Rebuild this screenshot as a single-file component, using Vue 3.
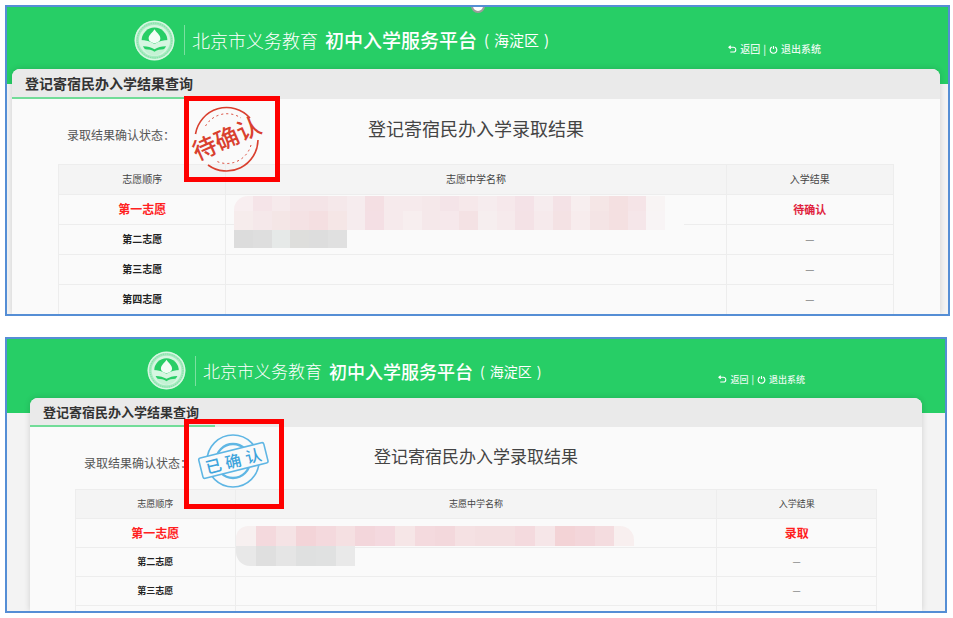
<template>
  <main class="page">
    <section v-for="s in screens" :key="s.id" class="screen" :class="s.id">
      <span v-if="s.handle" class="handle" />

      <!-- Green banner -->
      <header class="banner">
        <svg class="logo" viewBox="0 0 42 42" aria-hidden="true">
          <circle cx="21" cy="21" r="20.4" fill="#a6ebc0" />
          <circle cx="21" cy="21" r="19.6" fill="none" stroke="#d8f7e3" stroke-width="1.4" />
          <circle cx="21" cy="21" r="17.8" fill="none" stroke="#86e2a8" stroke-width="1.2" stroke-dasharray="1.4 1" />
          <circle cx="21" cy="21" r="16" fill="#d6f6e1" />
          <circle cx="21" cy="21" r="13.2" fill="#27ce66" />
          <path d="M21 9.5 C22.5 12.500 27 15 27 19 C27 21.500 25 23 21 24 C17 23 15 21.500 15 19 C15 15 19.500 12.500 21 9.500 Z" fill="#f2fdf6" />
          <path d="M5.500 20.500 C11 20.300 17 21.800 21 24.500 C25 21.800 31 20.300 36.500 20.500 C36.300 23 35.800 25 35 27 C29.500 26.500 25 27.500 21 30 C17 27.500 12.500 26.500 7 27 C6.200 25 5.700 23 5.500 20.500 Z" fill="#d6f6e1" />
          <path d="M10 30 C14 29.800 18 30.500 21 32.500 C24 30.500 28 29.800 32 30 C29 34 25 36.500 21 36.500 C17 36.500 13 34 10 30 Z" fill="#c4f2d4" />
        </svg>
        <span class="divider" />
        <h1 class="brand">
          <span class="light">北京市义务教育</span>
          <span class="strong">初中入学服务平台</span>
          <span class="area"><i>(</i>海淀区<i>)</i></span>
        </h1>
        <nav class="links">
          <a href="#">
            <svg viewBox="0 0 10 10" aria-hidden="true">
              <path d="M1 2.5 H6 A2.6 2.6 0 0 1 6 7.8 H2.5 M3 0.8 L1 2.5 L3 4.2" fill="none" stroke="#fff" stroke-width="1.2" />
            </svg>返回</a>
          <span>|</span>
          <a href="#">
            <svg viewBox="0 0 10 10" aria-hidden="true">
              <path d="M3.2 2.2 A3.7 3.7 0 1 0 6.8 2.2 M5 1 V4.4" fill="none" stroke="#fff" stroke-width="1.3" />
            </svg>退出系统</a>
        </nav>
      </header>

      <!-- Result card -->
      <div class="card">
        <div class="tabs"><h2 class="tab">登记寄宿民办入学结果查询</h2></div>
        <div class="summary">
          <span class="status">录取结果确认状态：</span>
          <h3 class="title">登记寄宿民办入学录取结果</h3>
        </div>

        <table class="results">
          <thead>
            <tr>
              <th>志愿顺序</th>
              <th class="school">志愿中学名称</th>
              <th>入学结果</th>
            </tr>
          </thead>
          <tbody>
            <tr v-for="(row, i) in s.rows" :key="row.order" :class="{ first: i === 0 }">
              <td class="order">{{ row.order }}</td>
              <td class="school">
                <div v-if="i === 0" class="mosaic">
                  <div v-for="(line, n) in s.mosaic" :key="n" class="tiles" :class="'line' + n">
                    <span v-for="(c, k) in line" :key="k" :style="{ background: c }" />
                  </div>
                </div>
              </td>
              <td class="outcome">{{ row.outcome }}</td>
            </tr>
            <tr v-if="s.tail" class="tail"><td /><td /><td /></tr>
          </tbody>
        </table>

        <!-- Highlighted stamp -->
        <div class="mark">
          <svg v-if="s.id === 'pending'" class="stamp" viewBox="0 0 86 76" role="img" aria-label="待确认">
            <g fill="none" stroke="#d9402f">
              <path d="M6.500 33 A31.500 31.500 0 0 1 61 17" stroke-width="1.6" />
              <path d="M69 39 A31.500 31.500 0 0 1 19 64" stroke-width="1.6" />
              <path d="M16.500 25 A25 25 0 0 1 52 17" stroke-dasharray="2 3" />
              <path d="M62 44 A25 25 0 0 1 27 60" stroke-dasharray="2 3" />
            </g>
            <text x="38" y="46" transform="rotate(-24 38 38)" text-anchor="middle" font-size="24" font-weight="500" fill="#d9402f">待确认</text>
          </svg>
          <svg v-else class="stamp" viewBox="0 0 90 80" role="img" aria-label="已确认">
            <g fill="none" stroke="#5fb6e4" stroke-width="1.6">
              <circle cx="44" cy="37" r="26" />
              <circle cx="44" cy="37" r="17" stroke-width="2.4" />
              <rect x="11" y="26" width="67" height="21" rx="2" transform="rotate(-14 44.500 37)" fill="#fafafa" />
            </g>
            <g fill="#3fa4dc" font-size="16" font-weight="500" text-anchor="middle" transform="rotate(-14 44.500 37)">
              <text x="24" y="43">已</text>
              <text x="44" y="43">确</text>
              <text x="65" y="43">认</text>
            </g>
          </svg>
        </div>
      </div>
    </section>
  </main>
</template>

<script setup>
const screens = [
  {
    id: 'pending',
    handle: true,
    tail: false,
    rows: [
      { order: '第一志愿', outcome: '待确认' },
      { order: '第二志愿', outcome: '—' },
      { order: '第三志愿', outcome: '—' },
      { order: '第四志愿', outcome: '—' },
    ],
    mosaic: [
      [
        '#f8eef0', '#f5e4e8', '#f6eaec', '#f4e4e7', '#f4e4e7', '#f5e8ea', '#f6ecee', '#f4dfe3',
        '#f6eaec', '#f6eaec', '#f5e8ea', '#f4e4e8', '#f6e8ea', '#f6ecee', '#f6e8eb', '#f4e2e7',
        '#f6ecee', '#f4e2e6', '#f7eeef', '#f5e6e6', '#f4e0e1', '#f5e4e7', '#f8f4f4', '#fafafa',
      ],
      [
        '#f6ecec', '#f5e8ea', '#f4e6e6', '#f4e2e4', '#f4dfe1', '#f5e6e6', '#f6ecee', '#f4dfe4',
        '#f6eaec', '#f7eeef', '#f5e8ea', '#f6e8eb', '#f4e2e4', '#f6eeef', '#f6eaec', '#f4e2e6',
        '#f6eaec', '#f4e2e4', '#f7eced', '#f4e4e5', '#f4e0e1', '#f5e6e9', '#f8f4f5', '#fafafa',
      ],
      ['#dcdcdc', '#dedede', '#e6e9e8', '#dededc', '#dddddd', '#e0e0e0'],
    ],
  },
  {
    id: 'confirmed',
    handle: false,
    tail: true,
    rows: [
      { order: '第一志愿', outcome: '录取' },
      { order: '第二志愿', outcome: '—' },
      { order: '第三志愿', outcome: '—' },
    ],
    mosaic: [
      [
        '#f7f0f0', '#f4d9dd', '#f5e3e5', '#f3d4d8', '#f4d9dd', '#f5e0e2', '#f3d6db', '#f4d9df',
        '#f6e6e7', '#f4dade', '#f3d8dc', '#f5e1e3', '#f4dfe1', '#f4dfe1', '#f4dade', '#f6e6e8',
        '#f3d3d6', '#f3d6da', '#f4dcdf', '#f8efef',
      ],
      ['#e8e8e8', '#dfdfdf', '#e5e5e5', '#dfe0e0', '#e0e1e1', '#e9e9e9'],
    ],
  },
]
</script>

<style>
body {
  margin: 0;
  background: #fff;
}
</style>

<style scoped>
.page {
  display: flex;
  flex-direction: column;
  gap: 21px;
  padding: 5px 3px 5px 5px;
  font-family: 'Noto Sans CJK SC', 'Liberation Sans', sans-serif;
}

.screen {
  position: relative;
  overflow: hidden;
  border: 2px solid #558ed5;
  background: #f3f3f3;
}
.pending {
  --banner: 62px;
  --edge: 127px;
  --logo: 41px;
  --thin: 18px;
  --bold: 19px;
  --area: 15px;
  --link: 10px;
  --tab: 30px;
  --tab-text: 14px;
  --summary: 65px;
  --title: 18px;
  --indent: 55px;
  --row: 30px;
  --cell: 10px;
}
.confirmed {
  --banner: 59px;
  --edge: 140px;
  --logo: 39px;
  --thin: 17px;
  --bold: 18px;
  --area: 14px;
  --link: 9px;
  --tab: 29px;
  --tab-text: 13px;
  --summary: 62px;
  --title: 17px;
  --indent: 54px;
  --row: 29px;
  --cell: 9px;
  margin-right: 3px;
}

.handle {
  position: absolute;
  top: -8px;
  left: 50%;
  width: 10px;
  height: 10px;
  margin-left: -7px;
  border: 2px solid #9c9c9c;
  border-radius: 50%;
  background: #fff;
}

/* Banner */
.banner {
  display: flex;
  align-items: center;
  height: var(--banner);
  padding: 0 var(--edge) 15px;
  background: #27ce66;
}
.logo { width: var(--logo); height: var(--logo); margin-top: 4px; }
.divider { width: 1px; height: 30px; margin: 4px 7px 0 9px; background: #7be0a0; }
.brand {
  display: flex;
  align-items: center;
  gap: 7px;
  margin: 4px 0 0;
  line-height: 28px;
  color: #fff;
  white-space: nowrap;
}
.light { font-size: var(--thin); font-weight: 300; }
.strong { font-size: var(--bold); font-weight: 500; }
.area { display: flex; gap: 5px; font-size: var(--area); font-weight: 400; }
.area i { font-style: normal; }

.links {
  display: flex;
  align-items: center;
  gap: 3px;
  margin: 22px 0 0 auto;
  font-size: var(--link);
  font-weight: 500;
  line-height: 14px;
  color: #e9fbf0;
}
.links a { display: flex; align-items: center; gap: 3px; color: inherit; text-decoration: none; }
.links svg { width: 9px; height: 9px; }

/* Card */
.card {
  position: relative;
  margin-top: -15px;
  border-radius: 8px 8px 0 0;
  background: #fafafa;
  box-shadow: 0 0 6px rgba(0, 0, 0, 0.15);
}
.pending .card { margin-left: 5px; margin-right: 8px; }
.confirmed .card { margin-left: 23px; margin-right: 23px; }

.tabs { display: flex; height: var(--tab); border-radius: 8px 8px 0 0; background: #eaeaea; }
.tab {
  box-sizing: border-box;
  min-width: 185px;
  margin: 0;
  padding-left: 13px;
  border-bottom: 2px solid #72dc98;
  font-size: var(--tab-text);
  font-weight: 700;
  line-height: 28px;
  color: #333;
}

.summary {
  display: grid;
  grid-template-columns: 1fr auto 1fr;
  height: var(--summary);
  padding-left: var(--indent);
  padding-right: var(--indent);
}
.status { padding-top: 26px; font-size: 12px; line-height: 20px; color: #555; }
.title { margin: 16px 0 0; font-size: var(--title); font-weight: 400; line-height: 26px; color: #444; }

/* Results */
.results {
  width: 90%;
  margin: 0 auto;
  border-spacing: 0;
  border-right: 1px solid #ededed;
  table-layout: fixed;
  font-size: var(--cell);
  line-height: 14px;
  text-align: center;
}
.results th,
.results td {
  box-sizing: border-box;
  width: 20%;
  height: var(--row);
  padding: 0 0 1px;
  border-top: 1px solid #ededed;
  border-left: 1px solid #ededed;
}
.results th { background: #f4f4f4; font-weight: 400; color: #444; }
.results .school { position: relative; width: 60%; }
.results .tail td { height: 6px; }
.order { font-weight: 700; color: #222; }
.outcome { font-weight: 700; color: #999; }
.first .order { font-size: 12px; color: #ff2020; }
.first .outcome { font-size: 12px; color: #ff2020; }
.pending .first .outcome { font-size: 11px; color: #e01f3d; }

/* Pixelated school names */
.mosaic { position: absolute; z-index: 1; top: 1px; left: 8px; width: 90%; }
.tiles { display: flex; height: 18px; }
.tiles span { flex: 1; }
.pending .line0 { height: 15px; border-top-left-radius: 14px; overflow: hidden; }
.pending .line1 { height: 19px; }
.pending .line2 { width: 25%; }
.confirmed .mosaic { top: 7px; left: 0; width: 83%; }
.confirmed .tiles { height: 20px; overflow: hidden; }
.confirmed .line0 { border-radius: 12px 14px 0 0; }
.confirmed .line1 { width: 30%; border-bottom-left-radius: 14px; }

/* Red highlight around the stamp */
.mark {
  position: absolute;
  z-index: 2;
  border: 5px solid #fe0000;
}
.pending .mark { top: 27px; left: 172px; width: 86px; height: 76px; }
.confirmed .mark { top: 21px; left: 154px; width: 90px; height: 80px; }
.stamp { display: block; width: 100%; height: 100%; overflow: visible; }
</style>
